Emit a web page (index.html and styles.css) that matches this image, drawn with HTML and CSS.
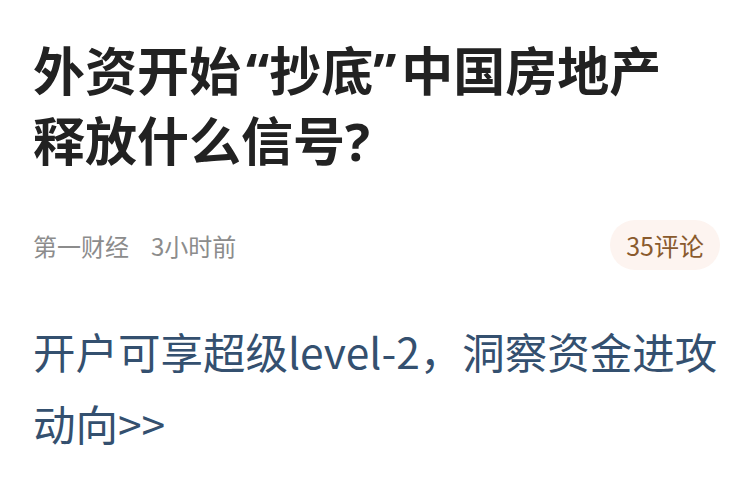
FILE: index.html
```html
<!DOCTYPE html>
<html lang="zh-CN">
<head>
<meta charset="utf-8">
<link rel="stylesheet" href="styles.css">
</head>
<body>
<div class="article">
  <h1 class="title">外资开始<span class="quote-open">“</span>抄底<span class="quote-close">”</span>中国房地产释放什么信号?</h1>
  <div class="meta">
    <div class="source">
      <span>第一财经</span>
      <span>3小时前</span>
    </div>
    <div class="badge">35评论</div>
  </div>
  <p class="promo">开户可享超级level-2，洞察资金进攻动向&gt;&gt;</p>
</div>
</body>
</html>
```
FILE: styles.css
```css
html, body {
  margin: 0;
  padding: 0;
  background: #ffffff;
}
body {
  font-family: "Noto Sans CJK SC", "Noto Sans", sans-serif;
  width: 750px;
  height: 500px;
  overflow: hidden;
}
.article {
  padding: 36px 10px 0 33px;
}
.title {
  margin: 0;
  font-family: "Noto Sans", "Noto Sans CJK SC", sans-serif;
  font-size: 52px;
  line-height: 70px;
  font-weight: 700;
  color: #222222;
  width: 670px;
}
.quote-open {
  margin-left: 5px;
}
.quote-close {
  margin-right: 5px;
}
.meta {
  margin-top: 44px;
  height: 50px;
  display: flex;
  justify-content: space-between;
  align-items: center;
  padding-right: 20px;
}
.source {
  display: flex;
  gap: 22px;
  font-size: 24px;
  color: #8c8c8c;
}
.badge {
  height: 50px;
  padding: 0 16px;
  border-radius: 25px;
  background: #fdf4f0;
  color: #8a5a2d;
  font-size: 25px;
  display: flex;
  align-items: center;
}
.promo {
  margin: 45px 0 0;
  font-size: 42.5px;
  line-height: 72px;
  color: #34506f;
}
```
